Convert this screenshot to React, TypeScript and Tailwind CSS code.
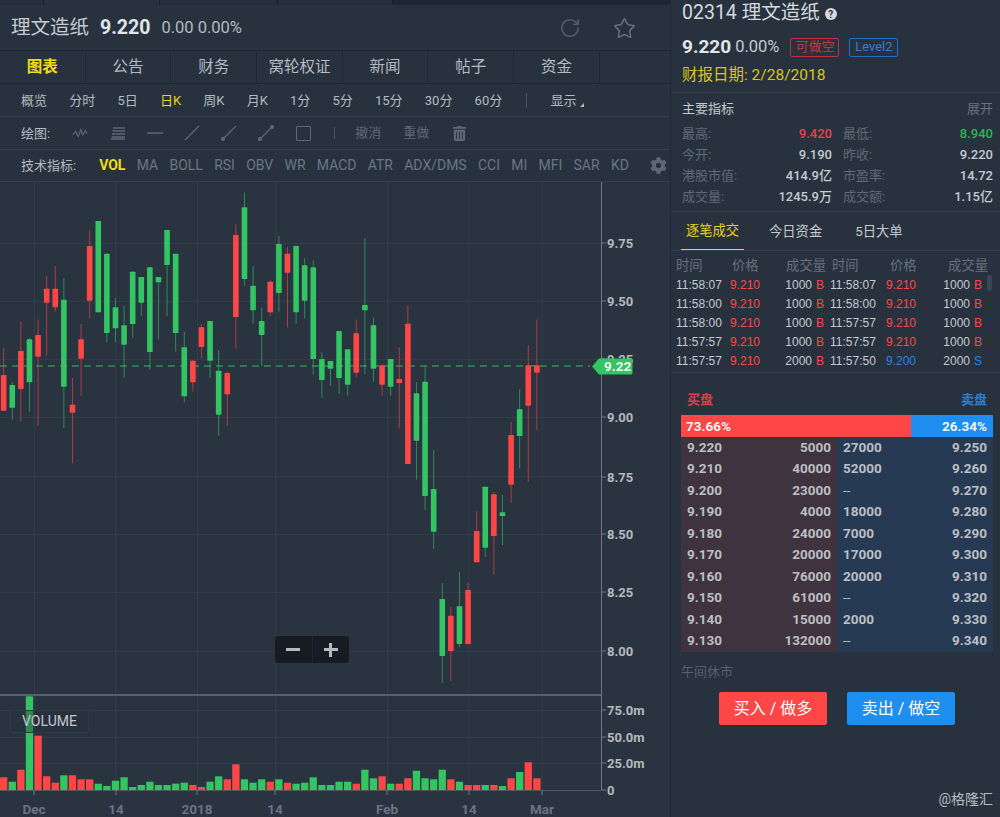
import { RotateCw, Star } from "lucide-react";
import { FaCog, FaTrashAlt } from "react-icons/fa";

type Candle = [string, number, number, number, number, number];

// c, wick top, body top, body bottom, wick bottom, volume top (page px)
const candles: Candle[] = [
  ["r", 347.7, 375, 410.7, 410.7, 777.3],
  ["g", 381.7, 385, 407.7, 420, 781.7],
  ["r", 321.7, 351, 389, 421.7, 769.7],
  ["g", 337.7, 339.3, 382.3, 411.7, 696.3],
  ["r", 319.7, 335, 356.7, 426, 735.7],
  ["r", 275.7, 288.7, 302.7, 356, 776.3],
  ["r", 266, 288.7, 307.3, 311.7, 782.7],
  ["g", 278, 299.7, 386.7, 428.3, 775.3],
  ["r", 378, 404.7, 412.7, 463.3, 775.3],
  ["r", 324, 339.3, 358.7, 395.7, 779.3],
  ["r", 230.3, 246, 300.7, 318.3, 779.3],
  ["g", 221, 221, 312.3, 312.3, 783.7],
  ["g", 253.7, 253.7, 333, 342.3, 786],
  ["g", 298, 307.3, 328.3, 342.3, 780.7],
  ["g", 305.7, 325.3, 344.7, 377.7, 777.3],
  ["g", 271, 271.7, 324, 337.7, 787],
  ["g", 277, 277, 302.7, 316.3, 785],
  ["g", 267.3, 267.3, 352, 370, 781.7],
  ["g", 277, 277, 282.3, 339.7, 785],
  ["g", 230, 230, 265, 316.3, 785],
  ["g", 253.7, 253.7, 333, 351.7, 783.7],
  ["g", 331.7, 347.3, 396.3, 402.3, 782.7],
  ["r", 360, 360.7, 382.3, 391.7, 785],
  ["r", 324.3, 327.3, 347, 358.3, 787],
  ["g", 321, 321, 360.7, 377.7, 781.7],
  ["g", 350, 370.7, 414.7, 435.7, 776.3],
  ["r", 371.7, 373, 394.3, 426, 779.3],
  ["r", 224.3, 235, 317, 348.7, 764.3],
  ["g", 192.3, 207.3, 279, 286, 779.3],
  ["g", 266, 285.7, 310.3, 323.7, 782.7],
  ["g", 307.7, 321, 335, 366, 779.3],
  ["r", 280.3, 281.7, 312.3, 316.3, 781.7],
  ["g", 236, 244, 293, 311.7, 779.3],
  ["r", 246.7, 253.7, 272.7, 327.7, 782.7],
  ["g", 246, 246, 312.3, 323.7, 783.7],
  ["g", 258.3, 265.3, 300.7, 318.3, 782.7],
  ["g", 260.3, 267.3, 359, 374.3, 777.3],
  ["g", 352.3, 359, 380, 397.7, 785],
  ["g", 361, 361, 368.7, 386, 785],
  ["g", 331, 331, 378, 393.7, 781.7],
  ["g", 349.3, 349.3, 384.7, 395.7, 781.7],
  ["r", 319.7, 333.3, 372.7, 377.7, 783.7],
  ["g", 238, 305, 310.3, 374.3, 769.7],
  ["g", 317.3, 325.3, 368.7, 381.7, 778.3],
  ["r", 364.3, 365.3, 384.7, 395.7, 776.3],
  ["g", 359, 359, 386.7, 395.7, 783.7],
  ["r", 347.3, 379, 383, 428.3, 783.7],
  ["r", 305.7, 323.7, 464, 464, 778.3],
  ["g", 382.3, 393.3, 440.7, 479.7, 770.7],
  ["g", 366.7, 381.7, 496, 510, 778.3],
  ["g", 450, 489, 531.7, 549, 779.3],
  ["g", 583, 599, 656, 683, 769.7],
  ["r", 606.7, 615.7, 651, 681, 779.3],
  ["g", 571.7, 606.3, 644, 647.3, 781.7],
  ["r", 583, 590, 644, 644, 785],
  ["r", 511.3, 531, 562.3, 562.3, 785],
  ["g", 486.7, 486.7, 547.7, 557, 785],
  ["r", 492, 494.3, 536, 575, 785],
  ["g", 495, 512.3, 516, 545, 786],
  ["r", 421.7, 435, 484.7, 503, 778.3],
  ["g", 389.3, 409.3, 436, 468.3, 772],
  ["r", 345.3, 365.3, 405.7, 482, 762.3],
  ["r", 319.7, 365.3, 372.7, 430.3, 778.3],
];

const tabs = ["图表", "公告", "财务", "窝轮权证", "新闻", "帖子", "资金"];
const periods = ["概览", "分时", "5日", "日K", "周K", "月K", "1分", "5分", "15分", "30分", "60分"];
const indicators = ["VOL", "MA", "BOLL", "RSI", "OBV", "WR", "MACD", "ATR", "ADX/DMS", "CCI", "MI", "MFI", "SAR", "KD"];

const stats = [
  ["最高:", "9.420", "text-[#e8404a]", "最低:", "8.940", "text-[#2fb457]"],
  ["今开:", "9.190", "text-[#c5cad0]", "昨收:", "9.220", "text-[#c5cad0]"],
  ["港股市值:", "414.9亿", "text-[#c5cad0]", "市盈率:", "14.72", "text-[#c5cad0]"],
  ["成交量:", "1245.9万", "text-[#c5cad0]", "成交额:", "1.15亿", "text-[#c5cad0]"],
  ["换手率:", "", "", "振幅:", "", ""],
];

const trades = [
  ["11:58:07", "9.210", "1000", "B", "11:58:07", "9.210", "1000", "B"],
  ["11:58:00", "9.210", "1000", "B", "11:58:00", "9.210", "1000", "B"],
  ["11:58:00", "9.210", "1000", "B", "11:57:57", "9.210", "1000", "B"],
  ["11:57:57", "9.210", "1000", "B", "11:57:57", "9.210", "1000", "B"],
  ["11:57:57", "9.210", "2000", "B", "11:57:50", "9.200", "2000", "S"],
];

const book = [
  ["9.220", "5000", "27000", "9.250"],
  ["9.210", "40000", "52000", "9.260"],
  ["9.200", "23000", "--", "9.270"],
  ["9.190", "4000", "18000", "9.280"],
  ["9.180", "24000", "7000", "9.290"],
  ["9.170", "20000", "17000", "9.300"],
  ["9.160", "76000", "20000", "9.310"],
  ["9.150", "61000", "--", "9.320"],
  ["9.140", "15000", "2000", "9.330"],
  ["9.130", "132000", "--", "9.340"],
];

const GRID_X = [34.5, 115.5, 197.5, 275.5, 387.5, 469, 542];
const GRID_Y = [243, 301, 359, 417, 476, 534, 592, 651, 710, 737, 763];
const PRICES: [string, number][] = [["9.75", 243], ["9.50", 301], ["9.25", 359], ["9.00", 417], ["8.75", 477], ["8.50", 534], ["8.25", 592], ["8.00", 651]];
const VOLS: [string, number][] = [["75.0m", 710], ["50.0m", 737], ["25.0m", 763], ["0", 790]];
const DATES: [string, number][] = [["Dec", 34], ["14", 116], ["2018", 197], ["14", 275], ["Feb", 387], ["14", 469], ["Mar", 542]];

function Chart() {
  const color = (c: string) => (c === "r" ? "#ff4747" : "#33c463");
  return (
    <svg viewBox="0 182 670 635" className="block w-[670px] h-[635px]">
      {GRID_X.map((x) => (
        <line key={x} x1={x} x2={x} y1={182} y2={790} stroke="#323d4b" strokeWidth={1} />
      ))}
      {GRID_Y.map((y) => (
        <line key={y} x1={0} x2={601} y1={y + 0.5} y2={y + 0.5} stroke="#303b49" strokeWidth={1} />
      ))}
      <line x1={601.5} x2={601.5} y1={182} y2={790} stroke="#75797f" />
      <line x1={0} x2={601} y1={695} y2={695} stroke="#6b7078" strokeWidth={1.4} />
      <line x1={0} x2={601} y1={790.5} y2={790.5} stroke="#50565f" />
      <line x1={0} x2={590} y1={366} y2={366} stroke="#33a85a" strokeWidth={1.5} strokeDasharray="7 5" opacity={0.8} />

      {candles.map((d, i) => {
        const x = 3.67 + i * 8.6;
        return (
          <g key={i} fill={color(d[0])}>
            <line x1={x} x2={x} y1={d[1]} y2={d[4]} stroke={color(d[0])} strokeWidth={1} opacity={0.6} />
            <rect x={x - 2.8} y={d[2]} width={5.6} height={d[3] - d[2]} rx={0.6} />
            <rect x={x - 3.65} y={d[5]} width={7.3} height={790 - d[5]} />
          </g>
        );
      })}

      {[...PRICES, ...VOLS].map(([t, y]) => (
        <g key={t}>
          <line x1={601} x2={606} y1={y} y2={y} stroke="#75797f" />
          <text x={607} y={y + 4.5} fontSize={13} fontWeight={700} fill="#b5b9be" fontFamily="Roboto, sans-serif">
            {t}
          </text>
        </g>
      ))}
      {DATES.map(([t, x]) => (
        <g key={t + x}>
          <line x1={x} x2={x} y1={790} y2={795} stroke="#75797f" />
          <text x={x} y={814} textAnchor="middle" fontSize={13.5} fontWeight={700} fill="#6b7480" fontFamily="Roboto, sans-serif">
            {t}
          </text>
        </g>
      ))}

      <path d="M592 366.5 L599 358.5 H631 a1.5 1.5 0 0 1 1.5 1.5 V373 a1.5 1.5 0 0 1 -1.5 1.5 H599 Z" fill="#33c463" />
      <text x={604} y={371} fontSize={13.5} fontWeight={700} fill="#f3f5f4" fontFamily="Roboto, sans-serif">
        9.22
      </text>
    </svg>
  );
}

function DrawIcons() {
  return (
    <div className="flex items-center text-[#5d6874] h-[33px] ml-[22px] -mt-[2px]">
      <svg viewBox="0 0 18 14" className="w-[16px] h-[14px] mr-[22px]" fill="none" stroke="currentColor" strokeWidth="1.3">
        <path d="M1 9 L4 5 L7 11 L10 3 L12 9 L15 4 L17 8" />
      </svg>
      <svg viewBox="0 0 16 14" className="w-[16px] h-[14px] mr-[21px]" fill="none" stroke="currentColor" strokeWidth="1.5">
        <path d="M3 2H15M2.5 5H15M2 8H15M1.5 11H15M1 13H15" />
      </svg>
      <svg viewBox="0 0 16 14" className="w-[16px] h-[14px] mr-[21px]" fill="none" stroke="currentColor" strokeWidth="1.5">
        <path d="M0 7H16" />
      </svg>
      <svg viewBox="0 0 16 16" className="w-[16px] h-[16px] mr-[21px]" fill="none" stroke="currentColor" strokeWidth="1.3">
        <path d="M1 15L15 1" />
      </svg>
      <svg viewBox="0 0 16 16" className="w-[16px] h-[16px] mr-[21px]" fill="none" stroke="currentColor" strokeWidth="1.3">
        <path d="M2 14L15 1" />
        <circle cx="2" cy="14" r="1.4" fill="currentColor" />
      </svg>
      <svg viewBox="0 0 16 16" className="w-[16px] h-[16px] mr-[22px]" fill="none" stroke="currentColor" strokeWidth="1.3">
        <path d="M2 14L14 2" />
        <circle cx="2" cy="14" r="1.4" fill="currentColor" />
        <circle cx="14" cy="2" r="1.4" fill="currentColor" />
      </svg>
      <div className="w-[15px] h-[15px] border-[1.5px] border-[#5d6874] rounded-[1px] mr-[23px]" />
      <div className="w-px h-[12px] bg-[#4a5460] mr-[20px]" />
      <span className="text-[13px] mr-[22px]">撤消</span>
      <span className="text-[13px] mr-[23px]">重做</span>
      <FaTrashAlt size={15} />
    </div>
  );
}

function LeftPanel() {
  return (
    <div className="w-[670px] flex flex-col shrink-0 h-full">
      <div className="h-[5px] flex bg-[#1e2631] shrink-0">
        <div className="w-[44px] bg-[#252e39] border-r border-[#1a212a]" />
        <div className="w-[116px] bg-[#28323e] border-r border-[#1a212a]" />
        <div className="w-[118px] bg-[#252e39] border-r border-[#1a212a]" />
        <div className="w-[115px] bg-[#252e39] border-r border-[#1a212a]" />
      </div>
      <div className="h-[45px] flex items-center shrink-0 pl-[11px] pt-[1px]">
        <span className="text-[19.5px] text-[#c7ccd2]">理文造纸</span>
        <span className="text-[19.5px] font-bold text-[#e2e5e8] ml-[11px]">9.220</span>
        <span className="text-[16.5px] text-[#b4bac1] ml-[11px]">0.00 0.00%</span>
        <div className="ml-auto flex items-center text-[#525d69] mr-[34px] gap-[32px]">
          <RotateCw size={22} strokeWidth={1.8} />
          <Star size={23} strokeWidth={1.6} className="text-[#65707c]" />
        </div>
      </div>
      <div className="h-[34px] flex shrink-0 border-y border-[#1f2731]">
        {tabs.map((t, i) => (
          <div
            key={t}
            className={`w-[85.7px] flex items-center justify-center pt-[1px] text-[15.5px] border-r border-[#1f2731] ${
              i === 0 ? "text-[#f1dc11] font-bold" : "text-[#b4bac1]"
            }`}
          >
            {t}
          </div>
        ))}
      </div>
      <div className="h-[33px] flex items-center gap-[22.2px] pl-[21px] pt-[1px] text-[13px] text-[#b4bac1] border-b border-[#333e4b] shrink-0">
        {periods.map((p) => (
          <span key={p} className={p === "日K" ? "text-[#e8d417]" : ""}>
            {p}
          </span>
        ))}
        <div className="w-px h-[15px] bg-[#4a5460] ml-[2px]" />
        <span className="flex items-end gap-[3px] ml-[1px]">
          显示
          <span className="w-0 h-0 border-l-[4px] border-l-transparent border-b-[4px] border-b-[#b4bac1] mb-[3px]" />
        </span>
      </div>
      <div className="h-[33px] flex items-center pl-[21px] pt-[2px] text-[13px] text-[#b4bac1] border-b border-[#333e4b] shrink-0">
        绘图:
        <DrawIcons />
      </div>
      <div className="h-[32px] flex items-center pl-[21px] text-[13px] text-[#b4bac1] border-b border-[#333e4b] shrink-0">
        <span className="mr-[23px]">技术指标:</span>
        <div className="flex gap-[11.25px] text-[#6a7684] text-[14px]">
          {indicators.map((t) => (
            <span key={t} className={t === "VOL" ? "text-[#f1dc11] font-bold" : ""}>
              {t}
            </span>
          ))}
        </div>
        <FaCog size={17} className="text-[#5d6874] ml-auto mr-[3px]" />
      </div>
      <div className="relative flex-1 bg-[#2a3340] min-h-0">
        <Chart />
        <div className="absolute left-[10px] top-[528px] w-[79px] h-[23px] flex items-center justify-center bg-[#262f3b]/40 border border-[#2f3945] text-[14px] text-[#c3c7cc] rounded-[1px]">
          VOLUME
        </div>
        <div className="absolute left-[275px] top-[454px] w-[74px] h-[27px] flex rounded-[3px] bg-[#171c23] text-[#b6babf]">
          <div className="flex-1 flex items-center justify-center border-r border-[#1f262e]">
            <div className="w-[14px] h-[3px] bg-[#b6babf]" />
          </div>
          <div className="flex-1 flex items-center justify-center relative">
            <div className="w-[14px] h-[3px] bg-[#b6babf]" />
            <div className="absolute w-[3px] h-[14px] bg-[#b6babf]" />
          </div>
        </div>
      </div>
    </div>
  );
}

function RightPanel() {
  return (
    <div className="flex-1 relative flex flex-col text-[#c5cad0] h-full overflow-hidden border-l border-[#202832]">
      <div className="h-[93px] border-b border-[#343f4c] px-[11px] shrink-0">
        <div className="h-[25px] flex items-center text-[19.5px] text-[#d5d9de] whitespace-nowrap">
          02314&nbsp;理文造纸
          <span className="ml-[5px] w-[12px] h-[12px] rounded-full bg-[#d5d9de] text-[#28323e] text-[10px] font-bold flex items-center justify-center mt-[3px]">
            ?
          </span>
        </div>
        <div className="h-[34px] flex items-center mt-[5px]">
          <span className="text-[19px] font-bold text-[#e2e5e8]">9.220</span>
          <span className="text-[16.5px] text-[#c5cad0] ml-[4px]">0.00%</span>
          <span className="ml-[11px] w-[49px] h-[19px] flex items-center justify-center border border-[#b9343f] rounded-[2px] text-[#c5343f] text-[13px]">
            可做空
          </span>
          <span className="ml-[10px] w-[49px] h-[19px] flex items-center justify-center border border-[#1f6fc4] rounded-[2px] text-[#2a7fde] text-[13px]">
            Level2
          </span>
        </div>
        <div className="text-[15.5px] text-[#d8c71a] leading-[20px] mt-[1px]">财报日期: 2/28/2018</div>
      </div>
      <div className="h-[119px] border-b border-[#343f4c] pl-[11px] pr-[7px] shrink-0 overflow-hidden">
        <div className="h-[29px] mt-[1px] flex items-center justify-between text-[13px]">
          <span className="text-[#c5cad0]">主要指标</span>
          <span className="text-[#68737f]">展开</span>
        </div>
        <div>
          {stats.map((r) => (
            <div key={r[0]} className="h-[21px] grid grid-cols-2 gap-x-[11px] text-[13px] items-center">
              <div className="flex justify-between">
                <span className="text-[#5f6a76]">{r[0]}</span>
                <span className={`font-medium ${r[2]}`}>{r[1]}</span>
              </div>
              <div className="flex justify-between">
                <span className="text-[#5f6a76]">{r[3]}</span>
                <span className={`font-medium ${r[5]}`}>{r[4]}</span>
              </div>
            </div>
          ))}
        </div>
      </div>
      <div className="h-[39px] flex border-b border-[#343f4c] pl-[10px] text-[13.3px] shrink-0">
        <div className="w-[63px] flex items-center justify-center pt-[1px] text-[#e8d417] border-b border-[#e8d417] h-[38px]">逐笔成交</div>
        <div className="ml-[25px] flex items-center pt-[1px] h-[38px]">今日资金</div>
        <div className="ml-[33px] flex items-center pt-[1px] h-[38px]">5日大单</div>
      </div>
      <div className="relative h-[122px] border-b border-[#343f4c] pl-[5px] pt-[5px] text-[13.3px] shrink-0">
        <div className="h-[20px] flex items-center text-[#66717d]">
          <span className="w-[54px]">时间</span>
          <span className="ml-[2px] w-[52px]">价格</span>
          <span className="w-[42px] text-right">成交量</span>
          <span className="ml-[6px] w-[58px]">时间</span>
          <span className="w-[50px]">价格</span>
          <span className="w-[48px] text-right">成交量</span>
        </div>
        <div className="font-['Liberation_Sans',sans-serif] text-[12px]">
          {trades.map((r, i) => (
            <div key={i} className="h-[18.8px] flex items-center whitespace-nowrap">
              <span className="w-[54px] text-[#c5cad0]">{r[0]}</span>
              <span className="w-[40px] text-[#ff4747]">{r[1]}</span>
              <span className="w-[42px] text-right">{r[2]}</span>
              <span className="w-[14px] ml-[4px] text-[#ff4747]">{r[3]}</span>
              <span className="w-[56px] text-[#c5cad0]">{r[4]}</span>
              <span className={`w-[42px] ${r[5] === "9.200" ? "text-[#2a82e4]" : "text-[#ff4747]"}`}>{r[5]}</span>
              <span className="w-[42px] text-right">{r[6]}</span>
              <span className={`w-[10px] ml-[4px] ${r[7] === "S" ? "text-[#2a82e4]" : "text-[#ff4747]"}`}>{r[7]}</span>
            </div>
          ))}
        </div>
        <div className="absolute right-[8px] top-[24px] w-[5px] h-[16px] rounded-[3px] bg-[#3a4653]" />
      </div>
      <div className="pl-[10px] pr-[7px] shrink-0">
        <div className="h-[42px] flex items-end justify-between text-[13px] font-bold px-[6px] pb-[6px]">
          <span className="text-[#d8434a]">买盘</span>
          <span className="text-[#2a7fd0]">卖盘</span>
        </div>
        <div className="h-[22px] flex text-[13.5px] font-bold text-[#f2f4f6]">
          <div className="w-[73.66%] bg-[#ff4747] flex items-center pl-[5px]">73.66%</div>
          <div className="flex-1 bg-[#1f8ef1] flex items-center justify-end pr-[6px]">26.34%</div>
        </div>
        <div className="grid grid-cols-2 text-[13.5px] font-bold text-[#bdbfc2]">
          <div className="bg-[#3e333f]">
            {book.map((r) => (
              <div key={r[0]} className="h-[21.5px] flex justify-between items-center px-[6px] pb-[2px]">
                <span>{r[0]}</span>
                <span>{r[1]}</span>
              </div>
            ))}
          </div>
          <div className="bg-[#263a54]">
            {book.map((r) => (
              <div key={r[3]} className="h-[21.5px] flex justify-between items-center px-[6px] pb-[2px]">
                <span className={r[2] === "--" ? "font-normal" : ""}>{r[2]}</span>
                <span>{r[3]}</span>
              </div>
            ))}
          </div>
        </div>
        <div className="mt-[11px] h-[18px] text-[13px] text-[#566170] leading-[18px]">午间休市</div>
        <div className="flex justify-center gap-[20px] mt-[11px]">
          <div className="w-[108px] h-[33px] bg-[#ff4747] rounded-[2px] text-white text-[16px] flex items-center justify-center">买入 / 做多</div>
          <div className="w-[108px] h-[33px] bg-[#1f8ef1] rounded-[2px] text-white text-[16px] flex items-center justify-center">卖出 / 做空</div>
        </div>
      </div>
      <div className="absolute right-[7px] bottom-[7px] text-[14px] text-[#b8bcc1]">@格隆汇</div>
    </div>
  );
}

export default function App() {
  return (
    <div
      className="w-[1000px] h-[817px] flex overflow-hidden bg-[#28323e]"
      style={{ fontFamily: '"Roboto", "Noto Sans CJK SC", sans-serif' }}
    >
      <LeftPanel />
      <RightPanel />
    </div>
  );
}
